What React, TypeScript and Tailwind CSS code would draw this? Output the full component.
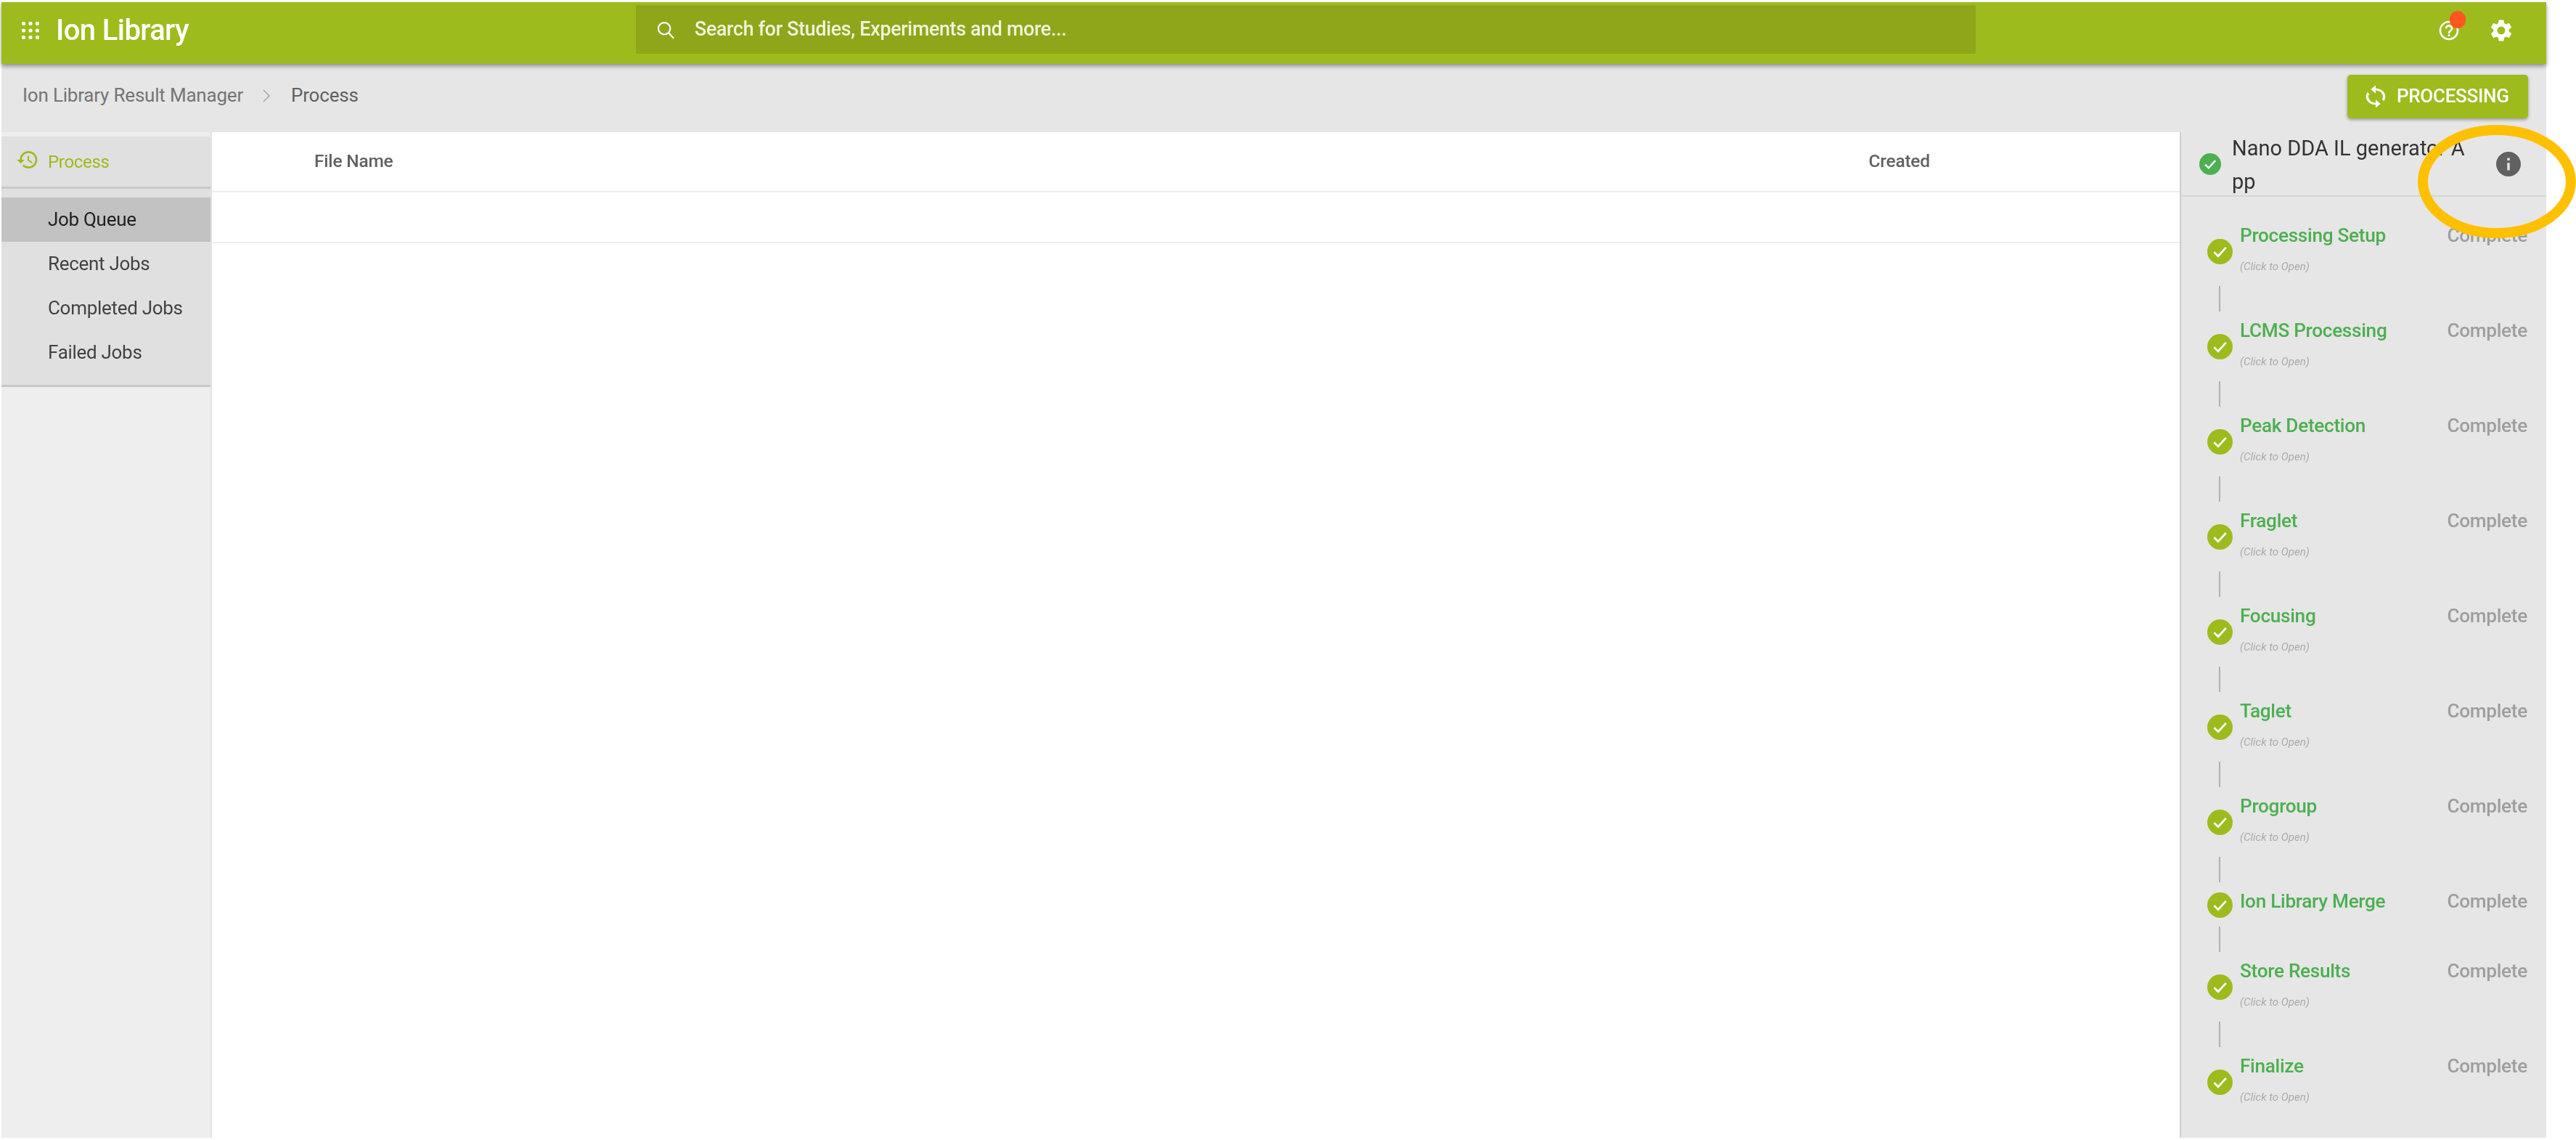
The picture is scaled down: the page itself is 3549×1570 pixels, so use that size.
import React from "react";

const Check = ({ size, color }: { size: number; color: string }) => (
  <svg width={size} height={size} viewBox="0 0 24 24" className="shrink-0">
    <circle cx="12" cy="12" r="12" fill={color} />
    <path d="M6.5 12.5l3.8 3.8 7.4-8.2" fill="none" stroke="#fff" strokeWidth="1.9" />
  </svg>
);

const steps = [
  { name: "Processing Setup", sub: true },
  { name: "LCMS Processing", sub: true },
  { name: "Peak Detection", sub: true },
  { name: "Fraglet", sub: true },
  { name: "Focusing", sub: true },
  { name: "Taglet", sub: true },
  { name: "Progroup", sub: true },
  { name: "Ion Library Merge", sub: false },
  { name: "Store Results", sub: true },
  { name: "Finalize", sub: true },
];

const GridIcon = () => (
  <svg width="24" height="24" viewBox="0 0 24 24" fill="#fff" className="shrink-0">
    {[2.5, 12, 21.5].flatMap((y) =>
      [2.5, 12, 21.5].map((x) => <circle key={`${x}-${y}`} cx={x} cy={y} r="2.6" />)
    )}
  </svg>
);

export default function App() {
  return (
    <div className="relative w-[3549px] h-[1570px] overflow-hidden bg-white font-['Roboto',sans-serif]">
      <div className="flex flex-col h-full pl-[2px] pr-[41px] pt-[3px] pb-[3px] blur-[0.6px]">
        {/* Top bar */}
        <header className="relative z-10 flex items-center h-[85px] shrink-0 bg-[#9dbb1c] shadow-[0_3px_6px_rgba(0,0,0,0.4)]">
          <div className="flex items-center w-[874px] pl-[28px] pb-[8px] gap-[23px]">
            <GridIcon />
            <span className="text-[40px] leading-none font-medium text-white tracking-[-0.6px]">Ion Library</span>
          </div>
          <div className="flex items-center self-start mt-[4px] h-[67px] w-[1846px] bg-[#8fa61b] rounded-[2px] pl-[27px] gap-[26px]">
            <svg width="28" height="28" viewBox="0 0 24 24" fill="none" stroke="#fff" strokeWidth="1.8">
              <circle cx="10.5" cy="10.5" r="7" />
              <path d="M15.5 15.5l6 6.5" />
            </svg>
            <span className="text-[26.8px] font-medium text-[#f1f5dc] tracking-[-0.3px]">Search for Studies, Experiments and more...</span>
          </div>
          <div className="relative flex items-center ml-auto pb-[8px] pr-[44px] gap-[38px]">
            <div className="relative">
              <svg width="32" height="32" viewBox="0 0 24 24" fill="#fff">
                <path d="M11 18h2v-2h-2v2zm1-16C6.48 2 2 6.48 2 12s4.48 10 10 10 10-4.48 10-10S17.52 2 12 2zm0 18c-4.41 0-8-3.59-8-8s3.59-8 8-8 8 3.59 8 8-3.59 8-8 8zm0-14c-2.21 0-4 1.79-4 4h2c0-1.1.9-2 2-2s2 .9 2 2c0 2-3 1.75-3 5h2c0-2.25 3-2.5 3-5 0-2.21-1.79-4-4-4z" />
              </svg>
              <span className="absolute -top-[11px] left-[17px] w-[22px] h-[24px] rounded-full bg-[#ff5722]" />
            </div>
            <svg width="36" height="36" viewBox="0 0 24 24" fill="#fff">
              <path d="M19.14 12.94c.04-.3.06-.61.06-.94s-.02-.64-.07-.94l2.03-1.58c.18-.14.23-.41.12-.61l-1.92-3.32c-.12-.22-.37-.29-.59-.22l-2.39.96c-.5-.38-1.03-.7-1.62-.94l-.36-2.54c-.04-.24-.24-.41-.48-.41h-3.84c-.24 0-.43.17-.47.41l-.36 2.54c-.59.24-1.13.57-1.62.94l-2.39-.96c-.22-.08-.47 0-.59.22L2.74 8.87c-.12.21-.08.47.12.61l2.03 1.58c-.05.3-.09.63-.09.94s.02.64.07.94l-2.03 1.58c-.18.14-.23.41-.12.61l1.92 3.32c.12.22.37.29.59.22l2.39-.96c.5.38 1.03.7 1.62.94l.36 2.54c.05.24.24.41.48.41h3.84c.24 0 .44-.17.47-.41l.36-2.54c.59-.24 1.13-.56 1.62-.94l2.39.96c.22.08.47 0 .59-.22l1.92-3.32c.12-.22.07-.47-.12-.61l-2.01-1.58zM12 15.6c-1.98 0-3.6-1.62-3.6-3.6s1.62-3.6 3.6-3.6 3.6 1.62 3.6 3.6-1.62 3.6-3.6 3.6z" />
            </svg>
          </div>
        </header>

        {/* Breadcrumb */}
        <div className="flex items-center h-[94px] shrink-0 bg-[#e6e6e6] pl-[29px] pr-[25px]">
          <div className="flex items-center pb-[7px]">
            <span className="text-[26px] text-[#757575] tracking-[-0.2px]">Ion Library Result Manager</span>
            <svg width="16" height="24" viewBox="0 0 16 24" fill="none" stroke="#aaa" strokeWidth="1.6" className="ml-[24px] mr-[26px]">
              <path d="M4 4l8 8-8 8" />
            </svg>
            <span className="text-[26px] text-[#616161] tracking-[-0.2px]">Process</span>
          </div>
          <button className="flex items-center ml-auto mb-[5px] h-[60px] w-[249px] pl-[24px] gap-[14px] bg-[#9dbb1c] rounded-[5px] shadow-[0_2px_4px_rgba(0,0,0,0.35)]">
            <svg width="30" height="34" viewBox="3 0 18 24" fill="#fff" preserveAspectRatio="none">
              <path d="M12 4V1L8 5l4 4V6c3.31 0 6 2.69 6 6 0 1.01-.25 1.97-.7 2.8l1.46 1.46C19.54 15.03 20 13.57 20 12c0-4.42-3.58-8-8-8zm0 14c-3.31 0-6-2.69-6-6 0-1.01.25-1.97.7-2.8L5.24 7.74C4.46 8.97 4 10.43 4 12c0 4.42 3.58 8 8 8v3l4-4-4-4v3z" />
            </svg>
            <span className="text-[26px] font-medium text-white tracking-[-0.3px]">PROCESSING</span>
          </button>
        </div>

        {/* Body */}
        <div className="flex flex-1 min-h-0">
          {/* Sidebar */}
          <aside className="flex flex-col w-[290px] shrink-0 bg-[#eeeeee] border-r-2 border-[#e2e2e2] pt-[6px]">
            <div className="flex items-center h-[72px] pl-[20px] gap-[12px] bg-[#e0e0e0] border-b-[3px] border-[#c8c8c8]">
              <svg width="32" height="32" viewBox="0 0 24 24" fill="#9dbb1c" className="-mt-[6px]">
                <path d="M13 3c-4.97 0-9 4.03-9 9H1l3.89 3.89.07.14L9 12H6c0-3.87 3.13-7 7-7s7 3.13 7 7-3.13 7-7 7c-1.93 0-3.68-.79-4.94-2.06l-1.42 1.42C8.27 19.99 10.51 21 13 21c4.97 0 9-4.03 9-9s-4.03-9-9-9zm-1 5v5l4.28 2.54.72-1.21-3.5-2.08V8H12z" />
              </svg>
              <span className="text-[24px] text-[#9dbb1c] tracking-[-0.3px]">Process</span>
            </div>
            <nav className="flex flex-col pt-[12px] pb-[14px] bg-[#e0e0e0] border-b-[3px] border-[#c8c8c8]">
              {["Job Queue", "Recent Jobs", "Completed Jobs", "Failed Jobs"].map((t, i) => (
                <div
                  key={t}
                  className={`flex items-center h-[61px] pl-[64px] text-[26px] tracking-[-0.3px] ${
                    i === 0 ? "bg-[#c2c2c2] text-[#212121]" : "text-[#424242]"
                  }`}
                >
                  {t}
                </div>
              ))}
            </nav>
          </aside>

          {/* Table */}
          <main className="flex-1 min-w-0 bg-white">
            <div className="flex items-center h-[83px] border-b-2 border-[#eeeeee] text-[24.5px] font-medium text-[#616161] tracking-[-0.2px]">
              <span className="ml-[141px]">File Name</span>
              <span className="ml-[2033px]">Created</span>
            </div>
            <div className="h-[70px] border-b-2 border-[#eeeeee]" />
          </main>

          {/* Right panel */}
          <aside className="flex flex-col w-[505px] shrink-0 bg-[#e6e6e6] border-l-2 border-[#cfcfcf]">
            <div className="flex items-center h-[89px] shrink-0 pl-[25px] pr-[35px] border-b-2 border-[#d6d6d6]">
              <Check size={30} color="#4caf50" />
              <span className="w-[335px] ml-[15px] mt-[2px] text-[29px] leading-[46px] text-[#333333] break-all">
                Nano DDA IL generator App
              </span>
              <svg width="34" height="34" viewBox="2 2 20 20" fill="#616161" className="ml-auto">
                <path d="M12 2C6.48 2 2 6.48 2 12s4.48 10 10 10 10-4.48 10-10S17.52 2 12 2zm1 15h-2v-6h2v6zm0-8h-2V7h2v2z" />
              </svg>
            </div>
            <div className="flex flex-col pt-[40px] pl-[36px] pr-[26px]">
              {steps.map((s, i) => (
                <div key={s.name}>
                  <div className={`flex items-center ${s.sub ? "h-[71px]" : "h-[36px]"}`}>
                    <Check size={35} color="#9dbb1c" />
                    <div className="flex-1 ml-[10px] self-start -mt-[2px]">
                      <div className="flex justify-between items-center h-[32px] text-[26.2px] font-medium tracking-[-0.3px]">
                        <span className="text-[#4caf50]">{s.name}</span>
                        <span className="text-[#9e9e9e]">Complete</span>
                      </div>
                      {s.sub && (
                        <div className="mt-[16px] text-[15px] leading-[20px] italic text-[#aaaaaa]">(Click to Open)</div>
                      )}
                    </div>
                  </div>
                  {i < steps.length - 1 && (
                    <div className="flex py-[12px] pl-[16px] h-[60px]">
                      <div className="w-[2px] h-[35px] bg-[#b0b0b0]" />
                    </div>
                  )}
                </div>
              ))}
            </div>
          </aside>
        </div>
      </div>

      {/* Hand-drawn annotation over the screenshot */}
      <svg width="222" height="160" viewBox="0 0 222 160" className="absolute left-[3329px] top-[171px]">
        <ellipse cx="111" cy="79" rx="102" ry="71" fill="none" stroke="#ffc000" strokeWidth="14" />
      </svg>
    </div>
  );
}
